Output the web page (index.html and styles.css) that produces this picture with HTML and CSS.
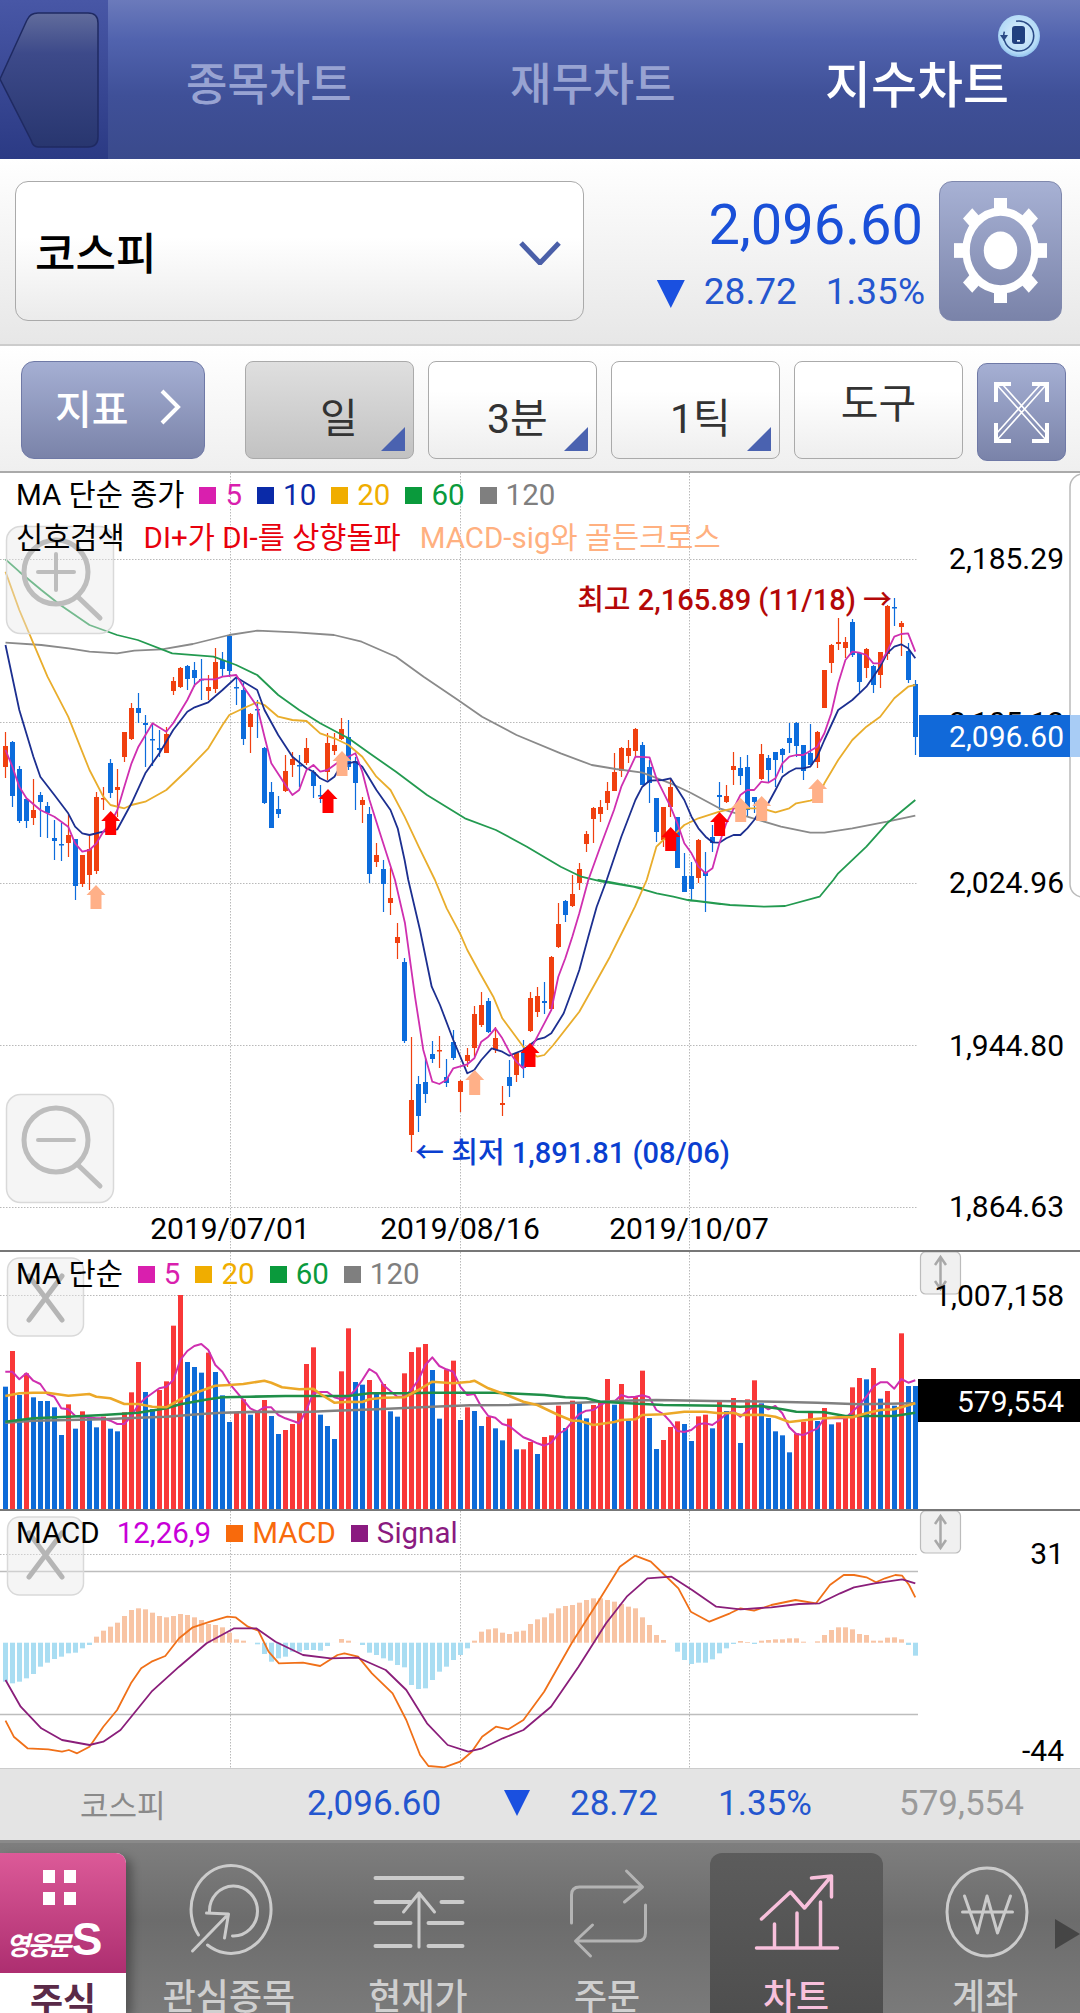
FILE: index.html
```html
<!DOCTYPE html>
<html lang="ko">
<head>
<meta charset="utf-8">
<title>지수차트</title>
<link rel="stylesheet" href="styles.css">
</head>
<body>
<div class="app">
  <header class="top">
    <div class="back">
      <svg class="back-icon" width="108" height="159" viewBox="0 0 108 159">
        <defs><linearGradient id="backg" x1="0" y1="0" x2="0" y2="1"><stop offset="0" stop-color="#616c9c"/><stop offset=".3" stop-color="#3d4a8a"/><stop offset="1" stop-color="#28366f"/></linearGradient></defs>
        <path d="M38 13H88Q98 13 98 23V137Q98 147 88 147H38Q33 147 31 140L0 79L27 20Q30 13 38 13Z" fill="url(#backg)" stroke="#1f2a62" stroke-width="1.5"/>
      </svg>
    </div>
    <div class="top-tab">종목차트</div>
    <div class="top-tab second">재무차트</div>
    <div class="top-tab on">지수차트</div>
    <svg class="rotate-badge" width="44" height="44" viewBox="0 0 44 44">
      <defs><radialGradient id="bad" cx=".5" cy=".45" r=".6"><stop offset="0" stop-color="#dff0fc"/><stop offset=".75" stop-color="#b5dbf7"/><stop offset="1" stop-color="#7fb6e8"/></radialGradient></defs>
      <circle cx="22" cy="22" r="21" fill="url(#bad)"/>
      <path d="M7 21A15 15 0 1 1 14 35" transform="rotate(75 22 22)" fill="none" stroke="#2b4a86" stroke-width="1.6"/>
      <path d="M3 21L11 21L7 27Z" fill="#2b4a86"/>
      <rect x="15" y="12" width="13" height="18" rx="3" fill="#21407f"/>
      <rect x="20" y="26" width="3" height="1.6" fill="#dff0fc"/>
    </svg>
  </header>

  <section class="bar-one">
    <div class="select">
      <span>코스피</span>
      <svg width="42" height="24" viewBox="0 0 42 24"><path d="M2 2L21 22L40 2" fill="none" stroke="#4a5fa8" stroke-width="5"/></svg>
    </div>
    <div class="quote">
      <div class="quote-price">2,096.60</div>
      <div class="quote-sub"><i class="tri"></i><span>28.72</span><span>1.35%</span></div>
    </div>
    <button class="gear-btn">
      <svg width="93" height="105" viewBox="0 0 100 100" preserveAspectRatio="none">
        <g fill="#fff">
          <rect x="43" y="0" width="14" height="16"/><rect x="43" y="0" width="14" height="16" transform="rotate(45 50 50)"/>
          <rect x="43" y="0" width="14" height="16" transform="rotate(90 50 50)"/><rect x="43" y="0" width="14" height="16" transform="rotate(135 50 50)"/>
          <rect x="43" y="0" width="14" height="16" transform="rotate(180 50 50)"/><rect x="43" y="0" width="14" height="16" transform="rotate(225 50 50)"/>
          <rect x="43" y="0" width="14" height="16" transform="rotate(270 50 50)"/><rect x="43" y="0" width="14" height="16" transform="rotate(315 50 50)"/>
        </g>
        <circle cx="50" cy="50" r="37" fill="none" stroke="#fff" stroke-width="8"/>
        <circle cx="50" cy="50" r="18" fill="#fff"/>
      </svg>
    </button>
  </section>

  <section class="bar-two">
    <button class="index-btn">지표<svg width="22" height="36" viewBox="0 0 22 36"><path d="M3 2L19 18L3 34" fill="none" stroke="#fff" stroke-width="4"/></svg></button>
    <button class="period active"><span class="p-a">일</span><i class="corner"></i></button>
    <button class="period"><span class="p-b">3분</span><i class="corner"></i></button>
    <button class="period"><span class="p-c">1틱</span><i class="corner"></i></button>
    <button class="period plain">도구</button>
    <button class="expand">
      <svg width="55" height="61" viewBox="0 0 55 61" fill="none" stroke="#fff">
        <path d="M2 20V2H17M38 2H53V20M53 41V59H38M17 59H2V41" stroke-width="4"/>
        <path d="M3 3L52 58M52 3L3 58M9 3L53 52M46 3L2 52" stroke-width="1.6"/>
      </svg>
    </button>
  </section>

  <section class="panel">
    <svg id="price" class="chart" width="1080" height="779" viewBox="0 473 1080 779"></svg>
    <div class="legend">
      <div class="legend-row">
        <span class="ink">MA 단순 종가</span>
        <span class="item c-pink"><i></i>5</span>
        <span class="item c-navy"><i></i>10</span>
        <span class="item c-gold"><i></i>20</span>
        <span class="item c-green"><i></i>60</span>
        <span class="item c-gray"><i></i>120</span>
      </div>
      <div class="legend-row wide">
        <span class="ink">신호검색</span>
        <span class="sig-red">DI+가 DI-를 상향돌파</span>
        <span class="sig-peach">MACD-sig와 골든크로스</span>
      </div>
    </div>
  </section>

  <section class="panel">
    <svg id="volume" class="chart" width="1080" height="259" viewBox="0 1252 1080 259"></svg>
    <div class="legend">
      <div class="legend-row">
        <span class="ink">MA 단순</span>
        <span class="item c-pink"><i></i>5</span>
        <span class="item c-gold"><i></i>20</span>
        <span class="item c-green"><i></i>60</span>
        <span class="item c-gray"><i></i>120</span>
      </div>
    </div>
  </section>

  <section class="panel">
    <svg id="macd" class="chart" width="1080" height="257" viewBox="0 1511 1080 257"></svg>
    <div class="legend">
      <div class="legend-row">
        <span class="ink">MACD</span>
        <span class="macd-param">12,26,9</span>
        <span class="item c-macd"><i></i>MACD</span>
        <span class="item c-signal"><i></i>Signal</span>
      </div>
    </div>
  </section>

  <section class="summary">
    <span class="sum-name">코스피</span>
    <span>2,096.60</span>
    <i class="tri small"></i>
    <span>28.72</span>
    <span>1.35%</span>
    <span class="sum-vol">579,554</span>
  </section>

  <nav class="tabs">
    <div class="home">
      <div class="home-top">
        <div class="dots"><i></i><i></i><i></i><i></i></div>
        <div class="brand">영웅문<b>S</b></div>
      </div>
      <div class="home-label">주식</div>
    </div>
    <div class="tab">
      <svg width="189" height="106" viewBox="134.5 1860 189 106" fill="none" stroke="#cbcbcb" stroke-width="3" stroke-linecap="round" stroke-linejoin="round">
        <path d="M198 1935A40 44 0 1 1 207 1945"/>
        <path d="M209 1912A24 25 0 1 1 232 1936"/>
        <path d="M192 1951L228 1914M206 1913L228 1914L224 1938"/>
      </svg>
      <span>관심종목</span>
    </div>
    <div class="tab">
      <svg width="189" height="106" viewBox="323.5 1860 189 106" fill="none" stroke="#cbcbcb" stroke-width="4" stroke-linecap="round" stroke-linejoin="round">
        <path d="M375 1878H462M375 1902H410M441 1902H462M375 1923H410M428 1923H462M375 1946H410M428 1946H462"/>
        <path d="M418.500 1893V1947M403 1912L418.500 1893L434 1912" stroke-width="3"/>
      </svg>
      <span>현재가</span>
    </div>
    <div class="tab">
      <svg width="189" height="106" viewBox="512.500 1860 189 106" fill="none" stroke="#b4b4b4" stroke-width="3" stroke-linecap="round" stroke-linejoin="round">
        <path d="M571 1923V1895Q571 1887 579 1887H640M626 1871L642 1887L624 1902"/>
        <path d="M645 1905V1933Q645 1941 637 1941H576M592 1925L575 1941L590 1956"/>
      </svg>
      <span>주문</span>
    </div>
    <div class="tab active">
      <svg width="189" height="106" viewBox="701.500 1860 189 106" fill="none" stroke="#f8c0dc" stroke-width="3.500" stroke-linecap="round" stroke-linejoin="round">
        <path d="M761 1919L790 1892L804 1908L831 1876M811 1878L831 1876L831 1897"/>
        <path d="M756 1948H837M774 1924V1948M796.500 1913V1948M820 1902V1948"/>
      </svg>
      <span>차트</span>
    </div>
    <div class="tab">
      <svg width="189" height="106" viewBox="890.500 1860 189 106" fill="none" stroke="#cbcbcb" stroke-width="3" stroke-linecap="round" stroke-linejoin="round">
        <ellipse cx="986.500" cy="1912" rx="40" ry="44"/>
        <path d="M964 1896L977 1933L986.500 1896L997 1933L1010 1896M962 1912H1012"/>
      </svg>
      <span>계좌</span>
    </div>
    <i class="more"></i>
  </nav>
</div>
<script src="script.js"></script>
</body>
</html>
```
FILE: styles.css
```css
* { box-sizing: border-box; }
html, body { margin: 0; padding: 0; background: #fff; }
body { font-family: Roboto, "Noto Sans CJK KR", sans-serif; }
button { font: inherit; padding: 0; margin: 0; }
.app { width: 1080px; height: 2013px; overflow: hidden; display: flex; flex-direction: column; }

/* header */
.top { position: relative; height: 159px; display: flex; align-items: center; background: linear-gradient(#6b7abb 0, #5163ae 25%, #3f5098 60%, #3a4a8c 100%); }
.back { width: 108px; height: 159px; flex: none; background: linear-gradient(#4857a6, #2b3a84); }
.back-icon { display: block; }
.top-tab { width: 324px; margin-left: 0; font: 500 45px/1 "Noto Sans CJK KR", sans-serif; color: #98a3d2; padding-top: 3px; }
.top-tab:first-of-type, .back + .top-tab { margin-left: 78px; }
.top-tab.second { width: 315px; }
.top-tab.on { color: #fff; font-size: 50px; width: auto; }
.rotate-badge { position: absolute; left: 997px; top: 14px; }

/* first bar */
.bar-one { height: 187px; flex: none; display: flex; align-items: center; padding: 0 18px 2px 15px; background: linear-gradient(#fff, #e7e7e7); border-bottom: 2px solid #ccc; }
.select { width: 569px; height: 140px; flex: none; display: flex; align-items: center; justify-content: space-between; padding: 0 22px 0 19px; border: 1.5px solid #aaa; border-radius: 13px; background: linear-gradient(#fff 40%, #ebebeb); }
.select span { font: 500 44px/1 "Noto Sans CJK KR", sans-serif; color: #000; }
.select svg { margin-top: 5px; }
.quote { flex: 1; display: flex; flex-direction: column; align-items: flex-end; color: #1a50d8; height: 140px; }
.quote-price { font-size: 56px; line-height: 66px; margin-top: 11px; margin-right: 2px; }
.quote-sub { display: flex; align-items: center; font-size: 37px; line-height: 44px; margin-top: 12px; color: #2456cf; }
.quote-sub span { margin-left: 29px; }
.quote-sub span:first-of-type { margin-left: 19px; }
.tri { display: block; width: 28px; height: 28px; background: #1a50e0; clip-path: polygon(0 0, 100% 0, 50% 100%); margin-top: 5px; }
.tri.small { width: 26px; height: 26px; margin: 0; }
.gear-btn { width: 123px; height: 140px; margin-left: 14px; flex: none; display: flex; align-items: center; justify-content: center; border: 1px solid #7f88ad; border-radius: 13px; background: linear-gradient(#a7b1d4, #7a83a9); }

/* second bar */
.bar-two { height: 127px; flex: none; display: flex; align-items: flex-start; padding: 15px 0 0 21px; background: linear-gradient(#fff, #efefef); border-bottom: 2px solid #aaa; }
.index-btn { width: 184px; height: 98px; flex: none; display: flex; align-items: center; padding: 0 0 6px 33px; gap: 30px; color: #fff; font: 500 40px/1 "Noto Sans CJK KR", sans-serif; border: 1px solid #6f79a6; border-radius: 13px; background: linear-gradient(#a5afd3, #7a83a9); }
.period { position: relative; width: 169px; height: 98px; flex: none; margin-left: 14px; font: 400 41px/1 Roboto, "Noto Sans CJK KR", sans-serif; color: #333; border: 1px solid #aaa; border-radius: 8px; background: linear-gradient(#fff 30%, #eee); }
.index-btn + .period { margin-left: 40px; }
.period.active { background: linear-gradient(#dfdfdf, #c2c2c2); }
.period.plain { padding-bottom: 12px; }
.period span { position: absolute; top: 34px; line-height: 46px; }
.p-a { left: 74px; }
.p-b { left: 58px; }
.p-c { left: 58px; }
.corner { position: absolute; right: 8px; bottom: 7px; width: 24px; height: 24px; background: #4a62b0; clip-path: polygon(100% 0, 100% 100%, 0 100%); }
.expand { width: 89px; height: 98px; margin: 2px 0 0 14px; flex: none; display: flex; align-items: center; justify-content: center; border: 1px solid #6f79a6; border-radius: 10px; background: linear-gradient(#a5afd3, #7a83a9); }

/* chart panels */
.panel { position: relative; flex: none; background: #fff; }
.chart { display: block; }
.chart text { font-family: Roboto, "Noto Sans CJK KR", sans-serif; dominant-baseline: central; }
.axis { font-size: 30px; fill: #000; }
.axis-white { font-size: 30px; fill: #fff; }
.note { font-size: 29px; font-weight: 500; }
.legend { position: absolute; left: 16px; top: 0; font-size: 29.5px; line-height: 44px; }
.legend-row { display: flex; gap: 15px; white-space: nowrap; }
.legend-row.wide { gap: 19px; line-height: 42px; }
.ink { color: #000; }
.item { display: flex; align-items: center; gap: 9px; }
.item i { display: block; width: 17px; height: 17px; background: currentColor; }
.c-pink { color: #d91fae; }
.c-navy { color: #0a2aa8; }
.c-gold { color: #f0ad00; }
.c-green { color: #0a9a3c; }
.c-gray { color: #7f7f7f; }
.c-macd { color: #f86a0c; }
.c-signal { color: #8a1a80; }
.macd-param { color: #c800d8; margin-left: 2px; }
.sig-red { color: #e8000c; }
.sig-peach { color: #ffb080; }

/* summary row */
.summary { height: 75px; flex: none; display: grid; grid-template-columns: 227px 197px 66px 148px 181px 1fr; align-items: center; padding: 0 0 3px 80px; background: #e4e4e4; border-top: 1px solid #ccc; border-bottom: 3px solid #8a8a8a; font-size: 35px; color: #2456cf; }
.sum-name { font: 400 31px/1 "Noto Sans CJK KR", sans-serif; color: #8a8a8a; }
.sum-vol { color: #9a9a9a; }

/* tab bar */
.tabs { position: relative; flex: 1; display: flex; align-items: flex-start; overflow: hidden; background: linear-gradient(#7e7e7e, #6c6c6c 45%, #7a7a7a); }
.home { width: 126px; height: 160px; margin-top: 10px; flex: none; border-radius: 0 10px 0 0; box-shadow: 6px 4px 10px rgba(0,0,0,.3); background: #fff; overflow: hidden; }
.home-top { height: 120px; padding-top: 17px; background: linear-gradient(#dc5a98, #ad2e70); color: #fff; }
.dots { width: 32px; margin-left: 43px; display: grid; grid-template-columns: 12px 12px; gap: 9px 9px; }
.dots i { display: block; height: 13px; background: #fff; }
.brand { margin: 12px 0 0 6px; font: italic 700 26px/44px "Noto Sans CJK KR", sans-serif; letter-spacing: -3px; white-space: nowrap; }
.brand b { font: 700 46px/44px "Liberation Sans", sans-serif; margin-left: 3px; letter-spacing: 0; }
.home-label { padding-top: 5px; text-align: center; font: 700 36px/40px "Noto Sans CJK KR", sans-serif; color: #5a2a48; }
.tab { width: 189px; height: 170px; flex: none; padding-top: 17px; display: flex; flex-direction: column; align-items: center; color: #cfcfcf; font: 500 36px/40px "Noto Sans CJK KR", sans-serif; }
.home + .tab { margin-left: 8.500px; }
.tab svg { display: block; flex: none; }
.tab span { margin-top: 8px; white-space: nowrap; }
.tab.active { position: relative; color: #f8c0dc; }
.tab.active::before { content: ""; position: absolute; left: 8px; right: 8px; top: 10px; bottom: -6px; border-radius: 12px 12px 0 0; background: linear-gradient(#5c5c5c, #4e4e4e); }
.tab.active svg, .tab.active span { position: relative; }
.more { position: absolute; right: 0; top: 76px; width: 25px; height: 30px; background: #454545; clip-path: polygon(0 0, 100% 50%, 0 100%); }
```
FILE: script.js
```js
const NS = 'http://www.w3.org/2000/svg';
function el(parent, tag, attrs, text) {
  const e = document.createElementNS(NS, tag);
  for (const k in attrs) e.setAttribute(k, attrs[k]);
  if (text !== undefined) e.textContent = text;
  parent.appendChild(e);
  return e;
}
const line = (p, x1, y1, x2, y2, stroke, w, dash) => el(p, 'line', Object.assign({ x1, y1, x2, y2, stroke, 'stroke-width': w }, dash ? { 'stroke-dasharray': dash } : {}));
const rect = (p, x, y, width, height, fill) => el(p, 'rect', { x, y, width, height, fill });
const label = (p, x, y, s, cls, fill, anchor) => el(p, 'text', Object.assign({ x, y, class: cls, 'text-anchor': anchor || 'end' }, fill ? { fill } : {}), s);
const poly = (p, pts, stroke, w, op) => el(p, 'polyline', { points: pts.map(a => a[0].toFixed(1) + ',' + a[1].toFixed(1)).join(' '), fill: 'none', stroke, 'stroke-width': w, 'stroke-linejoin': 'round', opacity: op || 1 });
const conv = (ox, oy, sx, sy, arr) => { const out = []; for (let i = 0; i < arr.length; i += 2) out.push([ox + arr[i] / sx, oy + arr[i + 1] / sy]); return out; };
const left = a => conv(0, 470, 2.904, 3, a);
const right = a => conv(540, 470, 2.904, 3, a);
const mid = a => conv(380, 880, 3, 3, a);
const wide = a => conv(0, 880, 1.452, 3, a);
const volL = a => conv(0, 1290, 3, 3, a);
const volR = a => conv(460, 1290, 3, 3, a);
const mac = a => conv(0, 1510, 1.452, 3, a);

const GRID = '#b9b9b9', DOT = '1.5 1.5';
const vgrid = (p, y1, y2) => [230, 460, 689].forEach(x => line(p, x + .5, y1, x + .5, y2, GRID, 1, DOT));
const hgrid = (p, y) => line(p, 0, y + .5, 918, y + .5, GRID, 1, DOT);

/* ---------- price ---------- */
// colour (1 up, 0 down), wick top, body top, body bottom, wick bottom
const CANDLES = [
[1,732,746,767,778],[0,741,742,796,807],[0,766,769,821,823],[0,798,799,821,828],[1,779,810,818,825],[0,792,795,802,837],[0,802,806,813,838],[0,820,838,841,860],[0,823,844,845,861],[1,815,835,843,857],
[0,839,839,886,900],[1,855,855,884,887],[1,835,849,875,890],[1,792,797,871,874],[1,787,798,799,810],[0,759,763,793,798],[1,769,787,790,817],[1,732,732,757,762],[1,703,708,739,740],[0,693,708,713,723],
[0,715,723,725,767],[0,724,739,740,766],[0,730,748,750,757],[1,727,734,753,753],[1,677,681,691,695],[1,667,668,687,688],[0,665,666,679,690],[0,662,670,678,687],[0,659,679,680,700],[1,675,687,691,700],
[1,648,662,689,693],[0,652,660,669,677],[0,636,636,671,677],[0,677,687,688,705],[0,683,690,739,745],[1,713,714,727,753],[0,700,709,710,738],[0,747,748,803,804],[0,782,792,828,828],[0,796,809,814,818],
[1,755,771,791,792],[1,752,759,765,777],[0,755,765,766,787],[1,738,748,763,765],[0,770,772,786,798],[0,785,795,796,803],[1,733,743,772,780],[1,733,745,751,755],[1,718,729,739,740],[0,720,737,767,770],
[0,757,761,783,810],[1,797,800,805,823],[0,807,814,874,883],[1,843,855,862,867],[0,860,869,884,912],[1,868,898,903,915],[1,923,937,943,959],[0,958,962,1041,1043],[1,1037,1100,1135,1152],[0,1076,1084,1116,1132],
[0,1058,1082,1094,1103],[0,1041,1054,1059,1063],[1,1036,1050,1051,1068],[0,1059,1077,1083,1087],[0,1030,1042,1058,1060],[1,1080,1081,1092,1112],[1,1048,1055,1061,1067],[1,1006,1014,1048,1057],[1,992,1005,1025,1027],[0,998,1001,1032,1033],
[1,1027,1038,1050,1053],[1,1086,1103,1105,1116],[0,1060,1077,1086,1097],[1,1052,1053,1075,1082],[0,1040,1052,1068,1078],[1,992,998,1031,1032],[1,987,996,1012,1017],[0,982,1001,1003,1014],[1,956,957,1009,1009],[1,903,924,947,948],
[0,900,901,915,922],[1,875,894,906,907],[1,863,869,883,890],[1,831,834,844,852],[1,807,808,819,843],[1,800,807,814,822],[1,782,791,803,810],[1,753,772,791,782],[1,747,748,771,777],[1,740,748,756,763],
[1,728,729,751,756],[0,742,745,785,785],[0,760,767,783,803],[0,798,798,832,842],[1,807,807,840,847],[1,778,787,807,817],[0,817,817,868,868],[0,853,876,892,892],[0,862,876,889,900],[1,839,840,878,883],
[0,852,872,876,912],[0,825,837,843,852],[0,782,795,797,810],[1,785,796,802,803],[1,752,766,770,785],[0,757,768,776,785],[0,755,767,810,817],[0,797,797,802,813],[1,744,754,779,780],[0,755,758,770,782],
[0,752,752,760,787],[0,748,749,755,773],[0,723,738,743,753],[0,722,723,746,757],[0,745,745,771,780],[0,724,753,765,765],[1,731,732,762,768],[1,670,670,708,708],[1,644,645,663,673],[1,618,642,644,650],
[1,637,642,648,658],[0,619,622,655,657],[0,653,653,682,692],[1,648,649,668,678],[0,665,666,685,693],[1,652,652,675,688],[1,605,606,654,660],[0,598,607,608,626],[1,621,623,627,656],[0,643,651,680,683],
[0,680,684,737,755]];

const MA5 = [...left([16,840,36,890,56,950,77,985,117,1020,158,1040,198,1070,218,1120,239,1145,260,1140,280,1120,300,1085,321,1060,341,1020,361,950,382,880,402,830,443,760,483,785,503,760,544,690,565,645,585,628,625,628,646,620,686,615,707,650,747,710,768,800,788,880,829,945,849,975,869,960,890,900,910,885,930,905,951,900,971,885,991,870,1012,860,1032,850,1052,905,1073,990]),
  ...mid([0,-140,45,0,75,130,105,350,130,510,157,605,178,612,199,600,220,565,262,553,283,535,304,485,325,470,346,445,367,475,388,515,409,545,430,565,451,510,472,470,493,430,514,390,535,290,556,235,577,170,598,100,625,0]),
  ...right([175,1130,215,1020,236,950,277,860,318,862,338,925,379,1010,399,1060,419,1120,440,1150,460,1190,481,1210,501,1195,521,1120,541,1060,582,975,602,960,622,960,643,935,663,938,684,925,704,880,724,860,744,855,765,855,805,830,826,790,846,730,866,640,887,570,907,545,927,548,948,555,968,580,988,580,1008,545,1029,500,1049,492,1069,490,1090,545])];
const MA10 = [...left([16,525,56,720,97,860,117,920,158,975,198,1030,218,1070,239,1090,260,1095,300,1085,341,1078,382,1000,422,910,463,850,503,780,544,725,565,712,605,697,646,660,686,622,707,635,747,660,768,720,808,795,849,860,890,895,910,905,930,925,951,935,971,920,991,885,1032,875,1052,890,1093,960,1134,1020,1155,1075,1175,1170]),
  ...mid([85,0,120,150,155,320,180,375,220,480,262,580,283,570,304,540,335,505,367,515,388,527,430,510,472,478,493,473,514,460,551,400,577,330,598,270,625,170,650,80,680,0]),
  ...right([236,1100,277,990,297,950,318,932,358,930,379,925,419,990,440,1040,460,1075,481,1100,501,1117,521,1118,541,1105,562,1095,582,1095,602,1075,622,1050,643,1015,663,1000,684,960,704,920,724,905,744,895,765,895,785,890,805,860,826,810,866,720,907,690,948,650,988,590,1008,550,1029,530,1049,523,1069,535,1090,565])];
const MA20 = [...left([16,305,56,420,97,520,138,620,198,740,260,900,300,980,321,1005,361,1015,382,1005,422,995,483,960,544,900,605,835,646,765,666,735,707,715,747,697,768,705,808,740,849,750,890,753,930,790,971,805,1012,825,1052,860,1093,920,1134,960,1175,1040,1216,1130]),
  ...mid([165,0,200,85,240,160,262,210,300,280,340,350,367,415,430,500,472,530,493,525,520,495,598,395,640,320,690,230,730,150,765,80,800,0]),
  ...right([338,1130,358,1110,399,1085,419,1065,460,1045,521,1025,562,1015,602,1015,643,1015,684,1027,724,1015,744,1000,785,992,805,985,826,940,866,870,907,810,948,770,988,740,1029,685,1069,650,1090,645])];
const MA60 = [...left([16,268,56,305,120,360,175,405,260,465,340,495,400,510,500,550,620,560,686,585,747,615,808,675,869,720,930,760,1012,805,1073,850,1150,905,1240,975,1350,1045,1440,1080,1530,1130]),
  ...right([60,1190,120,1220,180,1235,300,1255]),
  ...mid([655,0,680,5,760,20,830,40,880,50,930,62,970,65,1020,72]),
  ...wide([1000,60,1060,75,1110,80,1140,78,1190,50,1210,0]),
  ...right([866,1210,948,1130,1008,1060,1090,990])];
const MA120 = [...left([16,518,120,525,200,535,260,545,340,550,390,542,470,538,560,522,666,495,747,482,860,487,970,495,1050,515,1150,560,1230,620,1330,690,1400,740,1500,795]),
  ...right([60,850,150,885,220,897,297,908,379,940,440,970,521,1015,602,1040,700,1070,785,1088,826,1088,907,1075,1008,1055,1090,1037])];

function arrow(p, x, y1, y2, fill) {
  const hw = 9.5, sw = 5.5, ym = y1 + 10;
  el(p, 'polygon', { points: `${x},${y1} ${x + hw},${ym} ${x + sw},${ym} ${x + sw},${y2} ${x - sw},${y2} ${x - sw},${ym} ${x - hw},${ym}`, fill });
}
function zoomBtn(p, y, h, plus, cy) {
  el(p, 'rect', { x: 6.5, y: y + .5, width: 107, height: h, rx: 14, fill: 'rgba(232,232,232,.42)', stroke: '#d9d9d9', 'stroke-width': 1.5 });
  const g = el(p, 'g', { fill: 'none', stroke: '#bdbdbd', 'stroke-width': 5, 'stroke-linecap': 'round' });
  el(g, 'ellipse', { cx: 56, cy, rx: 32, ry: 32 });
  line(g, 78, cy + 25, 100, cy + 46, '#bdbdbd', 5);
  line(g, 38, cy, 74, cy, '#bdbdbd', 4);
  if (plus) line(g, 56, cy - 18, 56, cy + 18, '#bdbdbd', 4);
}
(function price() {
  const s = document.getElementById('price');
  vgrid(s, 473, 1251);
  [559, 722, 883, 1045, 1207].forEach(y => hgrid(s, y));
  CANDLES.forEach((c, i) => {
    const x = 5.5 + 7 * i, col = c[0] ? '#f0400f' : '#0c6cdc';
    rect(s, x - .6, c[1], 1.2, Math.max(c[4], c[3]) - c[1], col);
    rect(s, x - 2.5, c[2], 5, Math.max(c[3] - c[2], 1.5), col);
  });
  poly(s, MA120, '#8a8a8a', 1.8);
  poly(s, MA60, '#239a50', 1.8);
  poly(s, MA20, '#e9ad2c', 1.8);
  poly(s, MA10, '#1c2f90', 1.8);
  poly(s, MA5, '#cf2fb0', 1.8);
  [[110.7,811,835],[328,789,813],[530,1043,1067],[670.7,827,851],[719.6,812,836]].forEach(a => arrow(s, a[0], a[1], a[2], '#ff0000'));
  [[342,751,776],[96,885,909],[474.7,1070,1095],[740.7,798,822],[761.7,796,821],[817.6,779,803]].forEach(a => arrow(s, a[0], a[1], a[2], '#ffb088'));
  label(s, 892, 600, '최고 2,165.89 (11/18) →', 'note', '#b40808');
  label(s, 415, 1153, '← 최저 1,891.81 (08/06)', 'note', '#0a3fd0', 'start');
  zoomBtn(s, 526, 107, true, 572);
  zoomBtn(s, 1094, 108, false, 1140);
  el(s, 'rect', { x: 1070, y: 474, width: 30, height: 423, rx: 13, fill: '#fff', stroke: '#bbb', 'stroke-width': 1.5 });
  [['2,185.29', 558], ['2,105.12', 722], ['2,024.96', 882], ['1,944.80', 1045], ['1,864.63', 1206]].forEach(a => label(s, 1064, a[1], a[0], 'axis'));
  ['2019/07/01', '2019/08/16', '2019/10/07'].forEach((d, i) => label(s, [230, 460, 689][i], 1228, d, 'axis', null, 'middle'));
  rect(s, 919, 715, 151, 42, '#1169d9');
  rect(s, 1070, 715, 10, 42, '#a8ccf5');
  label(s, 1064, 736, '2,096.60', 'axis-white');
  line(s, 0, 1251, 1080, 1251, '#777', 2);
})();

function updown(p, y) {
  el(p, 'rect', { x: 920.5, y: y, width: 40, height: 42, rx: 5, fill: '#f0f0f0', stroke: '#bcbcbc', 'stroke-width': 1.2 });
  el(p, 'path', { d: `M940.5 ${y + 5}V${y + 37}M935 ${y + 13}L940.5 ${y + 5}L946 ${y + 13}M935 ${y + 29}L940.5 ${y + 37}L946 ${y + 29}`, fill: 'none', stroke: '#a8a8a8', 'stroke-width': 2.5 });
}
function closeBtn(p, y, cy) {
  el(p, 'rect', { x: 7.5, y, width: 76, height: 78, rx: 12, fill: 'rgba(232,232,232,.42)', stroke: '#d9d9d9', 'stroke-width': 1.5 });
  el(p, 'path', { d: `M29 ${cy - 24}L62 ${cy + 20}M62 ${cy - 24}L29 ${cy + 20}`, fill: 'none', stroke: '#b5b5b5', 'stroke-width': 5, 'stroke-linecap': 'round' });
}

/* ---------- volume ---------- */
const VOL_TOP = [290,183,315,250,322,333,333,352,435,343,416,364,380,412,380,416,424,367,307,216,306,357,300,274,107,15,216,231,248,188,246,316,396,366,328,374,368,330,378,432,420,402,366,222,172,374,408,447,244,115,276,284,270,310,282,364,380,250,186,172,162,240,386,238,212,390,352,363,408,380,415,451,386,478,478,456,492,441,436,347,414,332,337,385,345,335,267,344,282,392,318,242,384,477,450,411,394,402,453,379,374,415,333,363,324,459,328,271,340,384,424,436,487,430,395,368,393,354,403,397,382,292,264,268,234,326,303,347,130,288,288];
const VOL_UP = '0101000001010010001111110001011 00 11 0110110 111110 00111 001 010001 11 1000 1 01 0 1 0 1 1 0 1 0 1 1 0 1 1 1 0 1 0 0 1 1 1 0 1 0 1 1 0 1 0 1 1 1 0 0 0 0 0 1 1 1 0 1 0 1 1 1 1 1 0 1 0 1 0 1 0 0'.replace(/ /g, '');
const VOL_COLORS = {};
[1,3,9,11,14,17,18,19,22,23,24,25,29,33,34,36,37,40,41,42,43,44,48,49,52,54,57,58,59,60,63,64,66,69,72,74,75,77,78,79,81,84,85,86,88,90,91,94,95,96,99,100,102,104,106,107,113,114,115,117,119,120,121,122,124,126,128].forEach(i => VOL_COLORS[i] = 1);
(function volume() {
  const s = document.getElementById('volume');
  vgrid(s, 1252, 1510);
  hgrid(s, 1295);
  VOL_TOP.forEach((z, i) => {
    const y = 1290 + z / 3;
    rect(s, 3 + 7 * i, y, 5, 1510 - y, VOL_COLORS[i] ? '#f93838' : '#0d6bd8');
  });
  poly(s, [...volL([1276,225,1297,202,1318,228,1339,238,1360,245,1381,290]).slice(0, 0),
    ...volL([16,245,37,245,58,268,79,250,100,272,121,282,142,312,163,320,184,355,205,358,226,378,247,380,289,385,310,385,331,392,352,402,373,402,394,378,415,345,436,325,457,310,478,295,499,290,520,270,541,210,562,183,583,168,604,162,625,180,646,225,667,245,688,280,709,305,730,330,751,355,772,365,793,352,814,352,835,375,856,385,877,392,898,400,919,360,940,310,961,306,982,306,1003,322,1024,328,1045,320,1066,300,1087,270,1108,237,1129,250,1150,285,1171,303,1192,320,1213,320,1234,300,1255,270,1276,225,1297,202,1318,228,1339,238,1360,245]),
    ...volR([1,290,22,315,43,312,64,350,85,378,106,383,127,402,148,408,169,425,190,442,211,450,232,460,253,467,274,458,295,432,316,420,337,395,358,372,379,362,400,360,421,345,442,335,463,335,484,315,505,322,526,320,547,316,568,322,589,360,610,372,631,395,652,423,673,426,694,420,715,403,736,400,757,405,778,390,799,372,820,364,841,380,862,362,883,350,904,345,925,358,946,348,967,370,988,412,1009,432,1030,435,1051,425,1072,416,1093,385,1114,385,1135,384,1156,385,1177,365,1198,345,1219,320,1240,290,1261,277,1282,277,1303,296,1324,267,1345,278,1366,271])], '#cf2fb0', 2);
  const L120 = [...volL([16,398,100,392,205,390,310,388,373,385,499,380,604,372,667,368,793,365,919,366,1003,362,1130,358,1297,350,1410,346]), ...volR([148,345,232,342,358,338,484,332,589,330,757,333,946,335,1072,338,1198,343,1366,340])];
  const L60 = [...volL([16,395,100,385,205,380,310,375,415,368,499,355,541,343,625,328,667,322,750,320,856,318,960,318,1045,318,1108,310,1213,310,1297,308,1410,308]), ...volR([105,308,253,315,316,322,379,325,421,335,505,340,610,345,778,347,841,350,904,348,967,358,1009,365,1093,367,1156,378,1303,378,1366,368])];
  const L20 = [...volL([16,318,58,310,100,308,142,308,205,317,268,312,289,320,331,325,373,342,415,342,457,350,499,352,541,328,583,310,625,295,646,287,688,285,730,282,793,272,814,278,846,292,898,298,940,296,961,312,1003,338,1045,335,1087,336,1108,328,1150,323,1213,322,1255,300,1297,275,1360,280,1410,275]), ...volR([43,272,85,295,148,318,190,335,232,345,295,375,337,392,358,392,400,405,463,396,484,390,526,388,547,375,610,373,673,365,736,365,778,370,820,368,841,375,904,374,946,380,988,396,1072,386,1135,382,1177,382,1219,370,1261,360,1303,358,1345,346,1366,340])];
  poly(s, L120, '#808080', 2.6);
  poly(s, L60, '#1f8f48', 2.6);
  poly(s, L20, '#eca828', 2.6);
  line(s, 0, 1510, 1080, 1510, '#777', 2);
  closeBtn(s, 1258, 1300);
  updown(s, 1252);
  rect(s, 918, 1379, 162, 43, '#000');
  label(s, 1064, 1295, '1,007,158', 'axis');
  label(s, 1064, 1401, '579,554', 'axis-white');
})();

/* ---------- MACD ---------- */
const HIST = [515,520,515,505,492,470,458,447,440,430,428,415,405,380,362,350,338,318,300,295,298,308,318,322,318,312,315,322,330,342,345,352,368,388,392,398,403,432,455,445,440,425,425,420,420,422,408,398,387,392,398,405,428,435,445,452,465,472,525,537,535,510,485,470,450,435,415,392,365,358,355,368,372,365,362,342,328,322,310,295,288,285,278,270,265,265,270,275,282,290,295,322,345,375,390,398,425,450,462,458,458,448,430,415,402,393,396,402,392,390,388,388,385,385,395,398,394,375,360,352,352,358,372,375,392,392,383,382,388,405,437];
(function macd() {
  const s = document.getElementById('macd');
  vgrid(s, 1511, 1768);
  hgrid(s, 1554);
  line(s, 0, 1571.5, 918, 1571.5, '#bdbdbd', 1.5);
  line(s, 0, 1714.5, 918, 1714.5, '#bdbdbd', 1.5);
  HIST.forEach((z, i) => {
    const y = 1510 + z / 3, base = 1642.7;
    rect(s, 3 + 7 * i, Math.min(y, base), 5, Math.abs(y - base), z < 398 ? '#f8c4a4' : '#a9ddf2');
  });
  poly(s, mac([8,632,20,680,40,715,70,718,90,725,100,720,112,730,130,710,150,650,170,600,190,520,205,475,220,455,240,438,260,385,280,352,305,335,330,320,342,322,360,350,375,362,390,425,405,460,440,458,465,468,490,435,500,430,520,440,540,490,570,550,590,630,610,735,622,768,645,772,668,755,685,725,700,680,720,650,738,658,760,630,790,545,830,400,870,270,900,170,922,137,945,155,965,195,985,235,1003,305,1030,335,1060,310,1075,295,1095,302,1120,285,1155,270,1185,280,1205,225,1225,195,1240,195,1258,202,1272,217,1285,205,1300,195,1310,197,1320,225,1329,262]), '#f07018', 1.8);
  poly(s, mac([8,510,30,590,60,655,90,690,130,705,150,695,175,660,220,545,260,470,300,400,340,355,372,355,400,395,440,435,480,445,520,443,560,480,590,540,620,640,650,705,680,725,700,715,730,685,760,660,800,590,840,470,880,340,910,260,940,205,975,200,1005,240,1040,290,1075,298,1120,292,1160,282,1190,280,1220,250,1240,232,1270,220,1310,208,1329,220]), '#8a1e7a', 1.8);
  closeBtn(s, 1517, 1557);
  updown(s, 1511);
  label(s, 1064, 1553, '31', 'axis');
  label(s, 1064, 1750, '-44', 'axis');
})();
```
